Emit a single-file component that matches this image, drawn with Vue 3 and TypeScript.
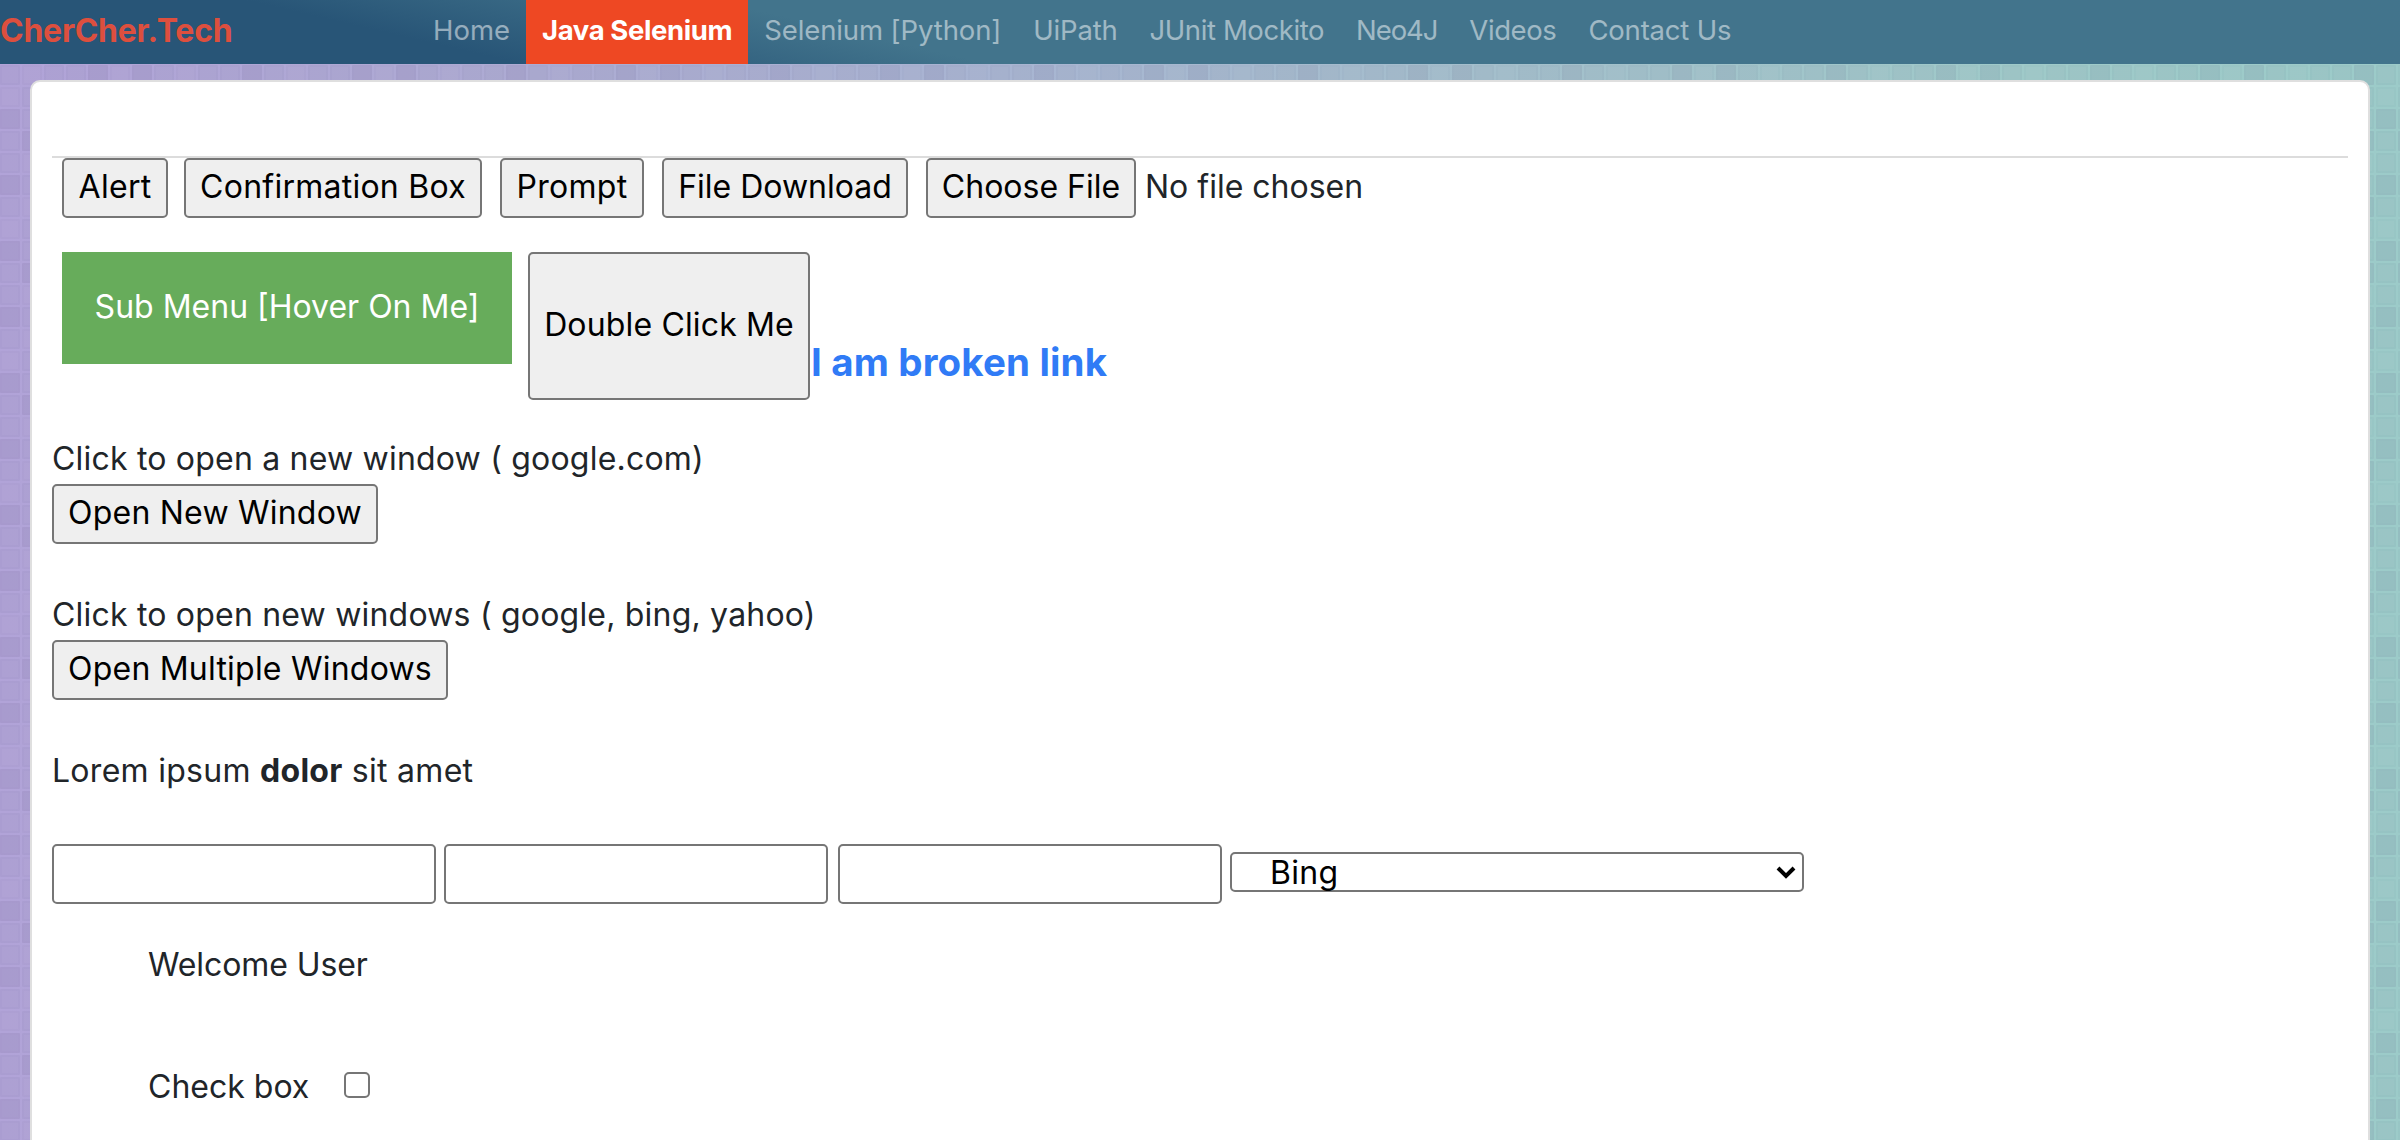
<script setup lang="ts">
interface NavItem {
  label: string
  tracking: number
  active?: boolean
}

interface Tile {
  x: number
  y: number
  shade: 'dark' | 'mid' | 'light'
}

const navItems: NavItem[] = [
  { label: 'Home', tracking: 0 },
  { label: 'Java Selenium', tracking: -0.4, active: true },
  { label: 'Selenium [Python]', tracking: -0.1 },
  { label: 'UiPath', tracking: -0.2 },
  { label: 'JUnit Mockito', tracking: -0.4 },
  { label: 'Neo4J', tracking: -1.1 },
  { label: 'Videos', tracking: -0.4 },
  { label: 'Contact Us', tracking: -0.2 },
]

// One repeat of the mosaic: 12 columns by 6 rows of 22px cells.
const mosaic = ['mlmmdldmlmmd', 'lmmldmmldmlm', 'dmlmmldmmlmm', 'mdmlmdlmdlmd', 'mlmdmmlmmdml', 'dmmlmdmlmmlm']
const shades = { d: 'dark', m: 'mid', l: 'light' } as const
const tiles: Tile[] = mosaic.flatMap((row, r) =>
  [...row].map((c, i) => ({ x: i * 22, y: r * 22, shade: shades[c as 'd' | 'm' | 'l'] })),
)
</script>

<template>
  <div class="page">
    <svg class="mosaic" width="2400" height="1140" aria-hidden="true">
      <defs>
        <pattern id="tiles" width="264" height="132" y="65" patternUnits="userSpaceOnUse">
          <g v-for="t in tiles" :key="`${t.x}-${t.y}`" :class="t.shade">
            <rect :x="t.x" :y="t.y" width="20" height="20" rx="1" />
            <rect class="inner" :x="t.x + 2" :y="t.y + 2" width="16" height="16" />
          </g>
        </pattern>
      </defs>
      <rect width="2400" height="1140" fill="url(#tiles)" />
    </svg>

    <header class="navbar">
      <a class="brand">CherCher.Tech</a>
      <nav class="links">
        <a
          v-for="item in navItems"
          :key="item.label"
          class="link"
          :class="{ active: item.active }"
        ><span :style="{ letterSpacing: item.tracking + 'px' }">{{ item.label }}</span></a>
      </nav>
    </header>

    <main class="card">
      <hr class="rule" />
      <div class="row actions">
        <button class="btn alert">Alert</button>
        <button class="btn confirm">Confirmation Box</button>
        <button class="btn prompt">Prompt</button>
        <button class="btn download">File Download</button>
        <div class="file">
          <button class="btn choose">Choose File</button>
          <span>No file chosen</span>
        </div>
      </div>

      <div class="row hover-row">
        <button class="submenu">Sub Menu [Hover On Me]</button>
        <button class="btn double">Double Click Me</button>
        <a class="broken">I am broken link</a>
      </div>

      <section class="block first">
        <p>Click to open a new window ( google.com)</p>
        <button class="btn one">Open New Window</button>
      </section>
      <section class="block">
        <p>Click to open new windows ( google, bing, yahoo)</p>
        <button class="btn many">Open Multiple Windows</button>
      </section>
      <p class="lorem">Lorem ipsum <b>dolor</b> sit amet</p>

      <div class="row fields">
        <input class="field" type="text" />
        <input class="field" type="text" />
        <input class="field third" type="text" />
        <div class="select">
          <span>Bing</span>
          <svg width="20" height="14" viewBox="0 0 20 14" aria-hidden="true">
            <path d="M2 3l8 8 8-8" fill="none" stroke="#000" stroke-width="4" />
          </svg>
        </div>
      </div>

      <p class="welcome">Welcome User</p>
      <label class="check">Check box<input type="checkbox" /></label>
    </main>
  </div>
</template>

<style>
body {
  margin: 0;
  overflow: hidden;
}
</style>

<style scoped>
.page {
  position: relative;
  width: 2400px;
  height: 1140px;
  overflow: hidden;
  font-family: Inter, "Liberation Sans", sans-serif;
  font-size: 32px;
  line-height: 48px;
  color: #212529;
  background: linear-gradient(90deg, #b1a3d8, #adabd3 22%, #a8b5d2 42%, #a4bfcc 62%, #9fcac9 84%, #9ccbc9);
}
.mosaic {
  position: absolute;
  inset: 0;
}
.dark { fill: rgba(60, 50, 90, 0.085); }
.mid { fill: rgba(60, 50, 90, 0.055); }
.light { fill: rgba(60, 50, 90, 0.035); }
.mid .inner,
.light .inner { fill: rgba(255, 255, 255, 0.035); }
.dark .inner { fill: rgba(255, 255, 255, 0.02); }

.navbar {
  position: relative;
  display: flex;
  height: 64px;
  background: linear-gradient(13deg, #285577 19.5%, #42748c 37%);
}
.brand {
  width: 417px;
  line-height: 61px;
  font-weight: 700;
  letter-spacing: -0.25px;
  color: #dd4f3e;
}
.links {
  display: flex;
  font-size: 27.5px;
  line-height: 60px;
}
.link {
  padding: 0 16px;
  color: rgba(255, 255, 255, 0.5);
  white-space: nowrap;
}
.link.active {
  background: #ee4823;
  color: #fff;
  font-weight: 700;
}

.card {
  position: relative;
  box-sizing: border-box;
  width: 2340px;
  height: 1100px;
  margin: 16px 0 0 30px;
  padding: 74px 20px 0;
  border: 2px solid #dfdfdf;
  border-radius: 10px;
  background: #fff;
}
.rule {
  height: 2px;
  margin: 0;
  border: 0;
  background: #dcdcdc;
}
.row {
  display: flex;
}
.btn {
  box-sizing: border-box;
  height: 60px;
  padding: 0 0 3px;
  border: 2px solid #767676;
  border-radius: 5px;
  background: #efefef;
  color: #000;
  font: inherit;
  white-space: nowrap;
}
.actions {
  padding-left: 10px;
}
.alert { width: 106px; margin-right: 16px; letter-spacing: 0.3px; }
.confirm { width: 298px; margin-right: 18px; letter-spacing: 0.25px; }
.prompt { width: 144px; margin-right: 18px; letter-spacing: 0.3px; }
.download { width: 246px; margin-right: 18px; }
.file {
  display: flex;
  gap: 9px;
}
.file span {
  line-height: 57px;
}
.choose { width: 210px; }
.hover-row {
  height: 148px;
  margin-top: 34px;
  padding-left: 10px;
}
.submenu {
  width: 450px;
  height: 112px;
  margin-right: 16px;
  padding: 0 0 3px;
  border: 0;
  background: #67ac5b;
  color: #fff;
  font: inherit;
  white-space: nowrap;
}
.double { width: 282px; height: 148px; letter-spacing: 0.15px; }
.broken {
  padding: 86px 0 0 1px;
  font-size: 38.5px;
  font-weight: 700;
  letter-spacing: 0.15px;
  color: #307bf6;
}

.block p,
.lorem,
.welcome {
  margin: 0;
  letter-spacing: 0.2px;
}
.block {
  margin-top: 47px;
}
.block.first {
  margin-top: 35px;
}
.block .btn {
  display: block;
  margin-top: 1px;
  letter-spacing: 0.22px;
}
.one { width: 326px; }
.many { width: 396px; }
.lorem {
  margin-top: 47px;
  letter-spacing: 0.28px;
}

.fields {
  gap: 8px;
  margin-top: 49px;
}
.field {
  box-sizing: border-box;
  width: 384px;
  height: 60px;
  padding: 0 14px;
  border: 2px solid #767676;
  border-radius: 5px;
  background: #fff;
  font: inherit;
}
.third {
  margin-left: 2px;
}
.select {
  box-sizing: border-box;
  display: flex;
  align-items: center;
  justify-content: space-between;
  width: 574px;
  height: 40px;
  margin-top: 8px;
  padding: 0 6px 0 38px;
  border: 2px solid #767676;
  border-radius: 5px;
  background: #fff;
  color: #000;
}
.select span {
  padding-top: 2px;
  letter-spacing: 0.3px;
}
.welcome {
  margin: 37px 0 0 96px;
  letter-spacing: -0.1px;
}
.check {
  display: flex;
  margin: 74px 0 0 96px;
}
.check input {
  appearance: none;
  box-sizing: border-box;
  width: 26px;
  height: 26px;
  margin: 9px 0 0 35px;
  border: 2px solid #767676;
  border-radius: 5px;
  background: #fff;
}
</style>
